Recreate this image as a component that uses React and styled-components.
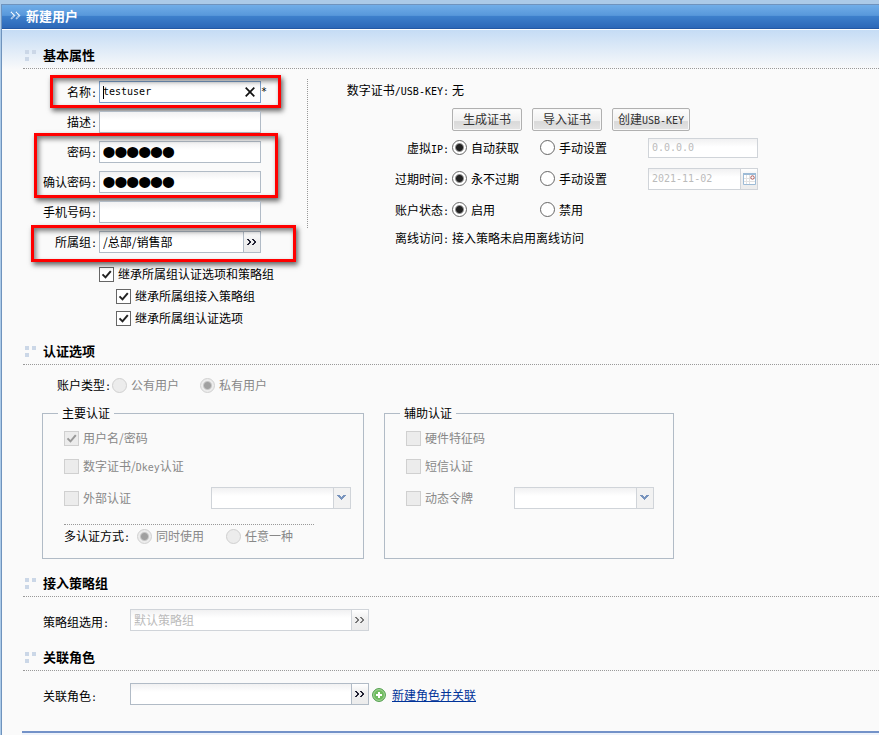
import React from 'react'
import styled, { createGlobalStyle } from 'styled-components'

const cjk = '"Noto Sans CJK SC", "Liberation Sans", sans-serif'
const mono = '"DejaVu Sans Mono", "Noto Sans CJK SC", monospace'

const colors = {
  page: '#fafafa',
  frame: '#abcae8',
  frameLine: '#6f93bd',
  line: '#b1bbc6',
  lineOff: '#d0d4d9',
  text: '#000',
  off: '#888',
  offText: '#bbb',
  dotted: '#999',
  link: '#003399',
}

const tick = (stroke) =>
  `url("data:image/svg+xml,%3Csvg xmlns='http://www.w3.org/2000/svg' viewBox='0 0 13 13'%3E%3Cpath d='M2.5 6.4l3 3L10.8 3.2' fill='none' stroke='%23${stroke}' stroke-width='2'/%3E%3C/svg%3E")`

const GlobalStyle = createGlobalStyle`
  * {
    box-sizing: border-box;
  }
  body {
    margin: 0;
    background: #eef3fb;
    color: ${colors.text};
    font: 12px/18px ${cjk};
  }
  input, button, select {
    font: inherit;
    color: inherit;
    margin: 0;
    padding: 0;
    border-radius: 0;
    outline: none;
  }
`

const Window = styled.div`
  border-top: 4px solid ${colors.frame};
  border-left: 1px solid ${colors.frame};
`
const Panel = styled.div`
  border-top: 1px solid ${colors.frameLine};
  border-left: 1px solid ${colors.frameLine};
  background: ${colors.page};
`
const TitleBar = styled.header`
  display: flex;
  align-items: center;
  gap: 5px;
  height: 24px;
  padding: 0 0 2px 8px;
  border-bottom: 1px solid #2459a4;
  background: linear-gradient(#70ade8, #5898db 45%, #3d7fcb 50%, #2c68b8);
  color: #fff;
`
const Title = styled.h1`
  margin: 0;
  font-size: 13px;
  line-height: 18px;
`
const Content = styled.form`
  border-top: 1px solid #fff;
  padding-top: 16px;
  background: linear-gradient(#c5dcf5, ${colors.page} 40px);
`
const Section = styled.section`
  padding-left: 21px;
`
const Head = styled.div`
  display: flex;
  align-items: center;
  gap: 7px;
  padding: 0 0 4px 2px;
  border-bottom: 1px dotted ${colors.dotted};
`
const HeadText = styled.h2`
  margin: 0;
  font-size: 13px;
  line-height: 18px;
`
const Footer = styled.footer`
  height: 4px;
  margin-left: 20px;
  border-top: 2px solid #7392c8;
  background: #eef3fb;
`

const Latin = styled.span`
  font-family: ${mono};
  font-size: 10px;
  line-height: 1;
`
const Columns = styled.div`
  display: flex;
  align-items: flex-start;
  padding: 7px 0 13px;
`
const LeftColumn = styled.div`
  display: flex;
  flex-direction: column;
  gap: 8px;
  width: 284px;
  padding-top: 5px;
`
const Divider = styled.div`
  height: 149px;
  margin-top: 3px;
  border-left: 1px dotted ${colors.dotted};
`
const RightColumn = styled.div`
  flex: 1;
`
const Row = styled.div`
  display: grid;
  grid-template-columns: ${(props) => props.$label || '74px'} 1fr;
  align-items: center;
  column-gap: ${(props) => props.$gap || '2px'};
  min-height: ${(props) => props.$height || '22px'};
`
const RowLabel = styled.label`
  padding-top: ${(props) => (props.$align === 'left' ? '4px' : '0')};
  text-align: ${(props) => props.$align || 'right'};
  white-space: nowrap;
`
const Group = styled.div`
  position: relative;
  display: flex;
  flex-direction: column;
  gap: 8px;
`
const Highlight = styled.div`
  position: absolute;
  inset: ${(props) => props.$inset};
  border: 3px solid #f00;
  box-shadow: 2px 3px 5px rgba(0, 0, 0, 0.6),
    inset 2px 3px 5px rgba(0, 0, 0, 0.5);
  pointer-events: none;
`
const Inline = styled.div`
  display: flex;
  align-items: center;
`

const Box = styled.div`
  position: relative;
  display: flex;
  flex: none;
  width: ${(props) => props.$width || '162px'};
  height: ${(props) => props.$height || '22px'};
  border: 1px solid
    ${(props) =>
      props.$off ? colors.lineOff : props.$focused ? '#7ba0cc' : colors.line};
  background: linear-gradient(#f1f1f2, #fff 8px);
`
const Input = styled.input`
  flex: 1;
  min-width: 0;
  padding: 0 3px;
  border: none;
  background: none;
  font-family: ${(props) => (props.$latin ? mono : cjk)};
  font-size: ${(props) => (props.$latin ? '10px' : '12px')};
  &:disabled {
    color: ${colors.offText};
  }
  &[type='password'] {
    font-family: 'Liberation Sans', sans-serif;
    font-size: 34px;
    line-height: 20px;
    -webkit-text-stroke: 2px #000;
  }
`
const Trigger = styled.button`
  display: flex;
  align-items: center;
  justify-content: center;
  width: 17px;
  border: none;
  border-left: 1px solid
    ${(props) => (props.disabled ? colors.lineOff : colors.line)};
  background: linear-gradient(#fff, #f0f0f0 40%, #ececec);
  color: ${(props) => (props.disabled ? '#777' : '#223')};
`
const Clear = styled.button`
  display: flex;
  align-items: center;
  width: 15px;
  border: none;
  background: none;
`
const Caret = styled.span`
  position: absolute;
  top: 4px;
  left: 3px;
  width: 1px;
  height: 13px;
  background: #000;
`
const Select = styled.select`
  position: absolute;
  inset: 0;
  width: 100%;
  border: none;
  background: none;
  appearance: none;
`
const Arrow = styled.span`
  display: flex;
  align-items: center;
  justify-content: center;
  width: 17px;
  margin-left: auto;
  border-left: 1px solid ${colors.lineOff};
  background: #f2f2f2;
`
const Button = styled.button`
  height: 23px;
  width: ${(props) => props.$width || '70px'};
  border: 1px solid #b0b0b0;
  border-radius: 2px;
  background: linear-gradient(#fdfdfd, #f0f0f0 55%, #d9d9d9 60%, #e4e4e4);
  box-shadow: inset 0 0 0 1px #f8f8f8;
  color: #333;
  white-space: nowrap;
`
const Buttons = styled.div`
  display: flex;
  gap: 10px;
  padding-top: 2px;
`

const Option = styled.label`
  display: flex;
  align-items: center;
  gap: 4px;
  width: ${(props) => props.$width || 'auto'};
  min-height: 22px;
  white-space: nowrap;
  color: ${(props) => (props.$off ? colors.off : colors.text)};
`
const Mark = styled.input`
  flex: none;
  width: 15px;
  height: 15px;
  appearance: none;
  border: 1px solid #666;
  background: #fff;
  &[type='radio'] {
    border-radius: 50%;
  }
  &[type='radio']:checked {
    background: radial-gradient(circle, #222 3px, #fff 5px);
  }
  &[type='checkbox']:checked {
    background: #fff ${tick('222')};
  }
  &:disabled {
    border-color: #d0d0d0;
    background: #ececec;
  }
  &[type='radio']:disabled:checked {
    background: radial-gradient(circle, #a0a0a0 3px, #ececec 5px);
  }
  &[type='checkbox']:disabled:checked {
    background: #ececec ${tick('999')};
  }
`
const Checks = styled.div`
  padding: 2px 0 0 76px;
`
const SubChecks = styled.div`
  padding-left: 17px;
`

const AuthBody = styled.div`
  padding: 9px 0 15px 19px;
`
const AccountRow = styled.div`
  display: flex;
  align-items: center;
  gap: 1px;
  padding-left: 15px;
`
const Fieldsets = styled.div`
  display: flex;
  gap: 20px;
  margin-top: 8px;
`
const Fieldset = styled.fieldset`
  flex: 0 1 ${(props) => props.$width};
  min-width: 0;
  margin: 0;
  padding: 5px 12px 11px 21px;
  border: 1px solid ${colors.line};
`
const Legend = styled.legend`
  margin-left: -6px;
  padding: 0 4px;
  line-height: 18px;
`
const Spread = styled.div`
  display: flex;
  justify-content: space-between;
  align-items: center;
  padding-right: ${(props) => props.$right || '0'};
  margin-top: 10px;
`
const Stack = styled.div`
  display: flex;
  flex-direction: column;
  gap: 6px;
`
const MultiAuth = styled.div`
  display: flex;
  align-items: center;
  gap: 7px;
  width: 250px;
  margin-top: 15px;
  border-top: 1px dotted ${colors.dotted};
`
const FieldBody = styled.div`
  padding: 12px 0 ${(props) => props.$bottom} 20px;
`
const AddLink = styled.a`
  display: flex;
  align-items: center;
  gap: 6px;
  margin-left: 3px;
  padding-top: 2px;
  color: ${colors.link};
`

const Chevrons = () => (
  <svg width="10" height="8" viewBox="0 0 10 8" fill="currentColor">
    <path d="M0 1h2v1h1v1h1v2H3v1H2v1H0V6h1V5h1V3H1V2H0z" />
    <path d="M5 1h2v1h1v1h1v2H8v1H7v1H5V6h1V5h1V3H6V2H5z" />
  </svg>
)

const TitleIcon = () => (
  <svg width="11" height="9" viewBox="0 0 11 9" fill="none" stroke="#fff">
    <path d="M1 1l3.5 3.5L1 8M6 1l3.5 3.5L6 8" strokeDasharray="1.2 .4" strokeWidth="1.4" />
  </svg>
)

const HeadIcon = () => (
  <svg width="11" height="11" viewBox="0 0 11 11" fill="#cbd7e7">
    <path d="M0 0h4v4H0zM7 0h4v4H7zM0 7h4v4H0z" />
  </svg>
)

const CalendarIcon = () => (
  <svg width="13" height="13" viewBox="0 0 13 13">
    <path d="M.5 1.5h12v11H.5z" fill="#fff" stroke="#9dbbd6" />
    <path d="M0 1h13v2H0z" fill="#9dbbd6" />
    <path d="M3.5 3v9M6.5 3v9M1 6.5h11M1 9.5h11" stroke="#e2e2e2" />
    <circle cx="9.5" cy="5.5" r="1.7" fill="#fff" stroke="#a55" />
  </svg>
)

const AddIcon = () => (
  <svg width="14" height="14" viewBox="0 0 14 14">
    <circle cx="7" cy="7" r="6.4" fill="#6fbb5f" stroke="#4d9a4a" />
    <circle cx="7" cy="7" r="5.4" fill="none" stroke="#a4d69a" />
    <path d="M7 4v6M4 7h6" stroke="#fff" strokeWidth="2" />
  </svg>
)

const SectionHead = ({ children }) => (
  <Head>
    <HeadIcon />
    <HeadText>{children}</HeadText>
  </Head>
)

const Field = ({ id, label, children, ...rest }) => (
  <Row {...rest}>
    <RowLabel htmlFor={id} $align={rest.$align}>
      {label}
      <Latin>:</Latin>
    </RowLabel>
    {children}
  </Row>
)

const Choice = ({ type = 'checkbox', name, checked, off, width, children }) => (
  <Option $off={off} $width={width}>
    <Mark type={type} name={name} defaultChecked={checked} disabled={off} />
    <span>{children}</span>
  </Option>
)

const Combo = ({ id, value, width, off }) => (
  <Box $width={width} $off={off}>
    <Input id={id} type="text" defaultValue={value} disabled={off} />
    <Trigger type="button" aria-label="选择" disabled={off}>
      <Chevrons />
    </Trigger>
  </Box>
)

const DropDown = ({ label }) => (
  <Box $width="140px" $off>
    <Arrow>
      <svg width="10" height="6" viewBox="0 0 10 6" fill="#7894bd">
        <path d="M0 0h3v1h1v1h1V1h1V0h3v1H8v1H7v1H6v1H5v1H4V4H3V3H2V2H1V1H0z" />
      </svg>
    </Arrow>
    <Select aria-label={label} disabled />
  </Box>
)

const BasicLeft = () => (
  <LeftColumn>
    <Group>
      <Field id="name" label="名称">
        <Inline>
          <Box $focused>
            <Input id="name" type="text" defaultValue="testuser" $latin />
            <Caret />
            <Clear type="button" aria-label="清除">
              <svg width="10" height="10" viewBox="0 0 10 10" stroke="#111">
                <path d="M.7 .7l8.6 8.6M9.3 .7L.7 9.3" strokeWidth="1.7" />
              </svg>
            </Clear>
          </Box>
          <Latin>*</Latin>
        </Inline>
      </Field>
      <Highlight $inset="-6px 26px -5px 27px" />
    </Group>
    <Field id="desc" label="描述">
      <Box>
        <Input id="desc" type="text" />
      </Box>
    </Field>
    <Group>
      <Field id="password" label="密码">
        <Box>
          <Input id="password" type="password" defaultValue="123456" />
        </Box>
      </Field>
      <Field id="confirm" label="确认密码">
        <Box>
          <Input id="confirm" type="password" defaultValue="123456" />
        </Box>
      </Field>
      <Highlight $inset="-8px 29px -5px 11px" />
    </Group>
    <Field id="phone" label="手机号码">
      <Box>
        <Input id="phone" type="text" />
      </Box>
    </Field>
    <Group>
      <Field id="group" label="所属组">
        <Combo id="group" value="/总部/销售部" />
      </Field>
      <Highlight $inset="-6px 11px -9px 8px" />
    </Group>
    <Checks>
      <Choice checked>继承所属组认证选项和策略组</Choice>
      <SubChecks>
        <Choice checked>继承所属组接入策略组</Choice>
        <Choice checked>继承所属组认证选项</Choice>
      </SubChecks>
    </Checks>
  </LeftColumn>
)

const wide = { $label: '141px', $gap: '3px' }

const BasicRight = () => (
  <RightColumn>
    <Field {...wide} $height="28px" label={<>数字证书<Latin>/USB-KEY</Latin></>}>
      <span>无</span>
    </Field>
    <Row {...wide} $height="28px">
      <span />
      <Buttons>
        <Button type="button">生成证书</Button>
        <Button type="button">导入证书</Button>
        <Button type="button" $width="78px">
          创建<Latin>USB-KEY</Latin>
        </Button>
      </Buttons>
    </Row>
    <Field {...wide} $height="31px" label={<>虚拟<Latin>IP</Latin></>}>
      <Inline>
        <Choice type="radio" name="ip" width="88px" checked>自动获取</Choice>
        <Choice type="radio" name="ip" width="108px">手动设置</Choice>
        <Box $width="110px" $height="20px" $off>
          <Input aria-label="虚拟IP" defaultValue="0.0.0.0" $latin disabled />
        </Box>
      </Inline>
    </Field>
    <Field {...wide} $height="31px" label="过期时间">
      <Inline>
        <Choice type="radio" name="expire" width="88px" checked>永不过期</Choice>
        <Choice type="radio" name="expire" width="108px">手动设置</Choice>
        <Box $width="110px" $off>
          <Input aria-label="过期时间" defaultValue="2021-11-02" $latin disabled />
          <Trigger type="button" aria-label="日历" disabled>
            <CalendarIcon />
          </Trigger>
        </Box>
      </Inline>
    </Field>
    <Field {...wide} $height="31px" label="账户状态">
      <Inline>
        <Choice type="radio" name="status" width="88px" checked>启用</Choice>
        <Choice type="radio" name="status">禁用</Choice>
      </Inline>
    </Field>
    <Field {...wide} $height="26px" label="离线访问">
      <span>接入策略未启用离线访问</span>
    </Field>
  </RightColumn>
)

const AuthOptions = () => (
  <AuthBody>
    <AccountRow>
      <span>
        账户类型<Latin>:</Latin>
      </span>
      <Choice type="radio" name="account" width="87px" off>公有用户</Choice>
      <Choice type="radio" name="account" checked off>私有用户</Choice>
    </AccountRow>
    <Fieldsets>
      <Fieldset $width="322px">
        <Legend>主要认证</Legend>
        <Stack>
          <Choice checked off>用户名/密码</Choice>
          <Choice off>数字证书/<Latin>Dkey</Latin>认证</Choice>
        </Stack>
        <Spread>
          <Choice off>外部认证</Choice>
          <DropDown label="外部认证" />
        </Spread>
        <MultiAuth>
          <span>
            多认证方式<Latin>:</Latin>
          </span>
          <Choice type="radio" name="multi" width="82px" checked off>同时使用</Choice>
          <Choice type="radio" name="multi" off>任意一种</Choice>
        </MultiAuth>
      </Fieldset>
      <Fieldset $width="290px">
        <Legend>辅助认证</Legend>
        <Stack>
          <Choice off>硬件特征码</Choice>
          <Choice off>短信认证</Choice>
        </Stack>
        <Spread $right="7px">
          <Choice off>动态令牌</Choice>
          <DropDown label="动态令牌" />
        </Spread>
      </Fieldset>
    </Fieldsets>
  </AuthBody>
)

const narrow = { $label: '85px', $align: 'left' }

const App = () => (
  <Window>
    <GlobalStyle />
    <Panel>
      <TitleBar>
        <TitleIcon />
        <Title>新建用户</Title>
      </TitleBar>
      <Content>
        <Section>
          <SectionHead>基本属性</SectionHead>
          <Columns>
            <BasicLeft />
            <Divider />
            <BasicRight />
          </Columns>
        </Section>
        <Section>
          <SectionHead>认证选项</SectionHead>
          <AuthOptions />
        </Section>
        <Section>
          <SectionHead>接入策略组</SectionHead>
          <FieldBody $bottom="17px">
            <Field {...narrow} id="policy" label="策略组选用">
              <Combo id="policy" value="默认策略组" width="239px" off />
            </Field>
          </FieldBody>
        </Section>
        <Section>
          <SectionHead>关联角色</SectionHead>
          <FieldBody $bottom="26px">
            <Field {...narrow} id="role" label="关联角色">
              <Inline>
                <Combo id="role" width="239px" />
                <AddLink href="#role">
                  <AddIcon />
                  新建角色并关联
                </AddLink>
              </Inline>
            </Field>
          </FieldBody>
        </Section>
      </Content>
      <Footer />
    </Panel>
  </Window>
)

export default App
